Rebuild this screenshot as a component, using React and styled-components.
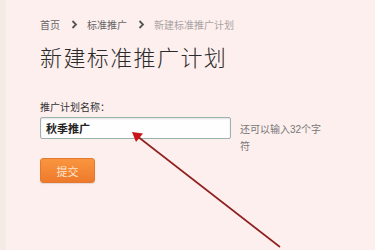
import React from "react";
import styled, { createGlobalStyle } from "styled-components";

const Global = createGlobalStyle`
  html, body { margin: 0; padding: 0; }
  body {
    background: #fdefee;
    font-family: "Liberation Sans", "Noto Sans CJK SC", sans-serif;
    width: 375px;
    height: 250px;
    overflow: hidden;
  }
`;

const Page = styled.div`
  position: relative;
  display: flex;
  width: 375px;
  height: 250px;
  background: #fdefee;
`;

const Strip = styled.div`
  width: 6px;
  flex: none;
  background: #f5ebe6;
`;

const Main = styled.div`
  flex: 1;
  padding: 16px 0 0 34px;
  display: flex;
  flex-direction: column;
`;

const Crumbs = styled.nav`
  display: flex;
  align-items: center;
  height: 16px;
  font-size: 10px;
  color: #666;
`;

const Crumb = styled.span`
  color: ${(p) => (p.$current ? "#a9a3a2" : "#666")};
`;

const Sep = styled.span`
  display: inline-flex;
  margin: 0 9px 0 11px;
  color: #555;
`;

const Title = styled.h1`
  margin: 9px 0 0 0;
  font-family: "Noto Sans CJK SC", serif;
  font-weight: 300;
  font-size: 22px;
  letter-spacing: 1.4px;
  line-height: 30px;
  color: #2a2a2a;
`;

const Label = styled.label`
  margin-top: 30px;
  font-size: 10px;
  line-height: 14px;
  color: #333;
`;

const Row = styled.div`
  margin-top: 2px;
  display: flex;
  align-items: flex-start;
  gap: 9px;
`;

const Input = styled.div`
  box-sizing: border-box;
  width: 191px;
  height: 22px;
  padding: 0 5px;
  display: flex;
  align-items: center;
  background: #fffefe;
  border: 1px solid #9db4aa;
  border-radius: 2px;
  box-shadow: inset 0 1px 2px rgba(0, 0, 0, 0.12);
  font-size: 11px;
  font-weight: bold;
  color: #222;
`;

const Hint = styled.div`
  width: 86px;
  margin-top: 4px;
  font-size: 10px;
  line-height: 17px;
  color: #777;
`;

const Submit = styled.button`
  margin-top: 3px;
  box-sizing: border-box;
  width: 55px;
  height: 25px;
  border: 1px solid #e5782f;
  border-radius: 3px;
  background: linear-gradient(#f9953f, #ee7a2b);
  color: #fde6d0;
  font-family: "Noto Sans CJK SC", sans-serif;
  font-size: 11px;
  padding: 0;
  box-shadow: 0 1px 1px rgba(0, 0, 0, 0.1);
`;

const Overlay = styled.svg`
  position: absolute;
  left: 0;
  top: 0;
  pointer-events: none;
`;

const Chevron = () => (
  <svg width="7" height="9" viewBox="0 0 7 9">
    <path d="M1.5 1 L5 4.5 L1.5 8" fill="none" stroke="#555" strokeWidth="1.8" />
  </svg>
);

export default function App() {
  return (
    <>
      <Global />
      <Page>
        <Strip />
        <Main>
          <Crumbs>
            <Crumb>首页</Crumb>
            <Sep><Chevron /></Sep>
            <Crumb>标准推广</Crumb>
            <Sep><Chevron /></Sep>
            <Crumb $current>新建标准推广计划</Crumb>
          </Crumbs>
          <Title>新建标准推广计划</Title>
          <Label>推广计划名称：</Label>
          <Row>
            <Input>秋季推广</Input>
            <Hint>还可以输入32个字符</Hint>
          </Row>
          <div>
            <Submit>提交</Submit>
          </div>
        </Main>
        <Overlay width="375" height="250" viewBox="0 0 375 250">
          <line x1="280" y1="247" x2="137" y2="136" stroke="#8f2121" strokeWidth="1.6" />
          <polygon points="132,132 143,133.5 136,142" fill="#c8161b" />
        </Overlay>
      </Page>
    </>
  );
}
